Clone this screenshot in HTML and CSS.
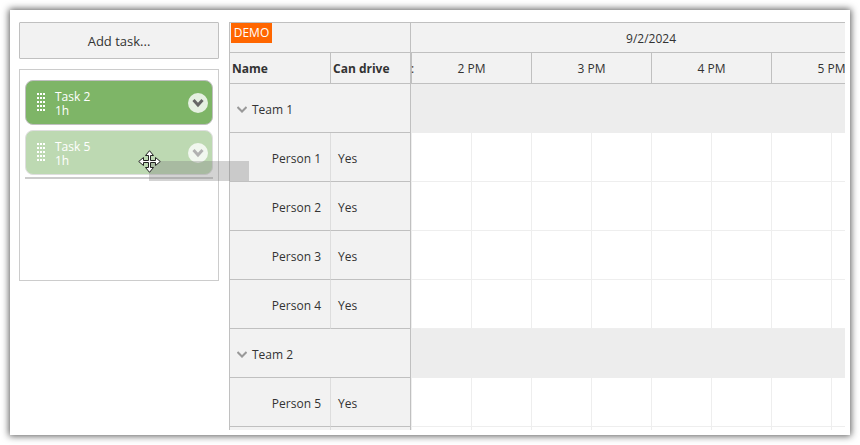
FILE: index.html
```html
<!DOCTYPE html>
<html lang="en">
<head>
<meta charset="utf-8">
<title>Scheduler</title>
<link rel="stylesheet" href="styles.css">
</head>
<body>
<main class="frame">
  <div class="content">
    <aside class="sidebar">
      <button type="button" class="add">Add task...</button>
      <div class="queue">
        <article class="task">
          <svg class="handle" viewBox="0 0 8 19" aria-hidden="true"><path d="M0 1h8M0 5h8M0 9h8M0 13h8M0 17h8"/></svg>
          <div class="task-text">Task 2<br>1h</div>
          <button type="button" class="more" aria-label="Task 2 menu"><svg viewBox="0 0 20 20"><path d="M5.500 7l4.500 5l4.500-5"/></svg></button>
        </article>
        <article class="task dragged">
          <svg class="handle" viewBox="0 0 8 19" aria-hidden="true"><path d="M0 1h8M0 5h8M0 9h8M0 13h8M0 17h8"/></svg>
          <div class="task-text">Task 5<br>1h</div>
          <button type="button" class="more" aria-label="Task 5 menu"><svg viewBox="0 0 20 20"><path d="M5.500 7l4.500 5l4.500-5"/></svg></button>
        </article>
        <div class="drop-line"></div>
      </div>
    </aside>
    <div class="scheduler">
      <table>
        <colgroup><col class="c-name"><col class="c-drive"><col class="c-edge"><col class="c-hour"><col class="c-hour"><col class="c-hour"><col class="c-hour"></colgroup>
        <thead>
          <tr class="days"><td class="corner" colspan="2"><span class="demo">DEMO</span></td><th class="day" colspan="5">9/2/2024</th></tr>
          <tr class="hours"><th class="label">Name</th><th class="label">Can drive</th><th class="edge">:</th><th>2 PM</th><th>3 PM</th><th>4 PM</th><th>5 PM</th></tr>
        </thead>
        <tbody>
          <tr class="team"><th colspan="2"><svg class="chevron" viewBox="0 0 10 7" aria-hidden="true"><path d="M.5 1L5 5.500L9.500 1"/></svg>Team 1</th><td class="slots" colspan="5"></td></tr>
          <tr><th class="person">Person 1</th><td class="drive">Yes</td><td class="slots" colspan="5"></td></tr>
          <tr><th class="person">Person 2</th><td class="drive">Yes</td><td class="slots" colspan="5"></td></tr>
          <tr><th class="person">Person 3</th><td class="drive">Yes</td><td class="slots" colspan="5"></td></tr>
          <tr><th class="person">Person 4</th><td class="drive">Yes</td><td class="slots" colspan="5"></td></tr>
          <tr class="team"><th colspan="2"><svg class="chevron" viewBox="0 0 10 7" aria-hidden="true"><path d="M.5 1L5 5.500L9.500 1"/></svg>Team 2</th><td class="slots" colspan="5"></td></tr>
          <tr><th class="person">Person 5</th><td class="drive">Yes</td><td class="slots" colspan="5"></td></tr>
          <tr><th class="person"></th><td class="drive"></td><td class="slots" colspan="5"></td></tr>
        </tbody>
      </table>
    </div>
  </div>
  <div class="ghost"></div>
  <svg class="cursor" viewBox="0 0 23 23" aria-hidden="true"><path d="M11.500 .7L15.500 5.500H12.500V10.500H17.500V7.500L22.300 11.500L17.500 15.500V12.500H12.500V17.500H15.500L11.500 22.300L7.500 17.500H10.500V12.500H5.500V15.500L.7 11.500L5.500 7.500V10.500H10.500V5.500H7.500Z"/></svg>
</main>
</body>
</html>
```
FILE: styles.css
```css
* { box-sizing: border-box; }

body {
  margin: 0;
  padding: 10px;
  height: 100vh;
  background: #fff;
  color: #333;
  font: 12px/16px "Open Sans", "Noto Sans", sans-serif;
}

.frame {
  position: relative;
  height: 100%;
  padding: 12px 5px 5px 9px;
  background: #fff;
  box-shadow: 0 0 7px 1px rgba(0, 0, 0, .65);
}

.content {
  display: flex;
  gap: 10px;
  height: 100%;
  overflow: hidden;
}

.sidebar {
  flex: 0 0 200px;
  display: flex;
  flex-direction: column;
  gap: 10px;
}

button { font: inherit; color: inherit; }

.add {
  height: 37px;
  border: 1px solid #c0c0c0;
  border-radius: 1px;
  background: #f2f2f2;
  font-size: 13px;
}

.queue {
  display: flex;
  flex-direction: column;
  gap: 5px;
  height: 212px;
  padding: 10px 5px;
  border: 1px solid #ccc;
}

.task {
  display: flex;
  align-items: center;
  height: 45px;
  padding: 0 4px 0 11px;
  border: 1px solid #c0c0c0;
  border-radius: 8px;
  background: #7eb567;
  color: #fff;
}

.dragged { opacity: .5; }

.handle {
  width: 8px;
  height: 19px;
  margin-right: 10px;
  stroke: #fff;
  stroke-width: 2;
  stroke-dasharray: 2 1;
}

.task-text { flex: 1; padding-top: 2px; line-height: 14px; }

.more {
  width: 20px;
  height: 20px;
  padding: 0;
  border: 0;
  border-radius: 50%;
  background: #e5f0e1;
}

.more svg { display: block; fill: none; stroke: #666; stroke-width: 3; }

.drop-line { height: 2px; margin-top: -3px; background: #ccc; }

.scheduler {
  flex: 1;
  min-width: 0;
  overflow: hidden;
  border: 1px solid #c0c0c0;
  border-width: 1px 0 0 1px;
}

table {
  width: 662px;
  table-layout: fixed;
  border-collapse: separate;
  border-spacing: 0;
}

.c-name { width: 101px; }
.c-drive { width: 80px; }
.c-edge { width: 1px; }
.c-hour { width: 120px; }

th, td {
  height: 49px;
  padding: 4px 0 0;
  border: 1px solid #c0c0c0;
  border-width: 0 1px 1px 0;
  background: #f2f2f2;
  font-weight: 400;
  text-align: center;
}

.days > * { height: 30px; padding-top: 2px; }
.hours > * { height: 31px; padding-top: 2px; }
.days .corner { padding-top: 0; text-align: left; vertical-align: top; }

.demo {
  display: block;
  width: 41px;
  margin-left: 1px;
  background: #f60;
  color: #fff;
  line-height: 20px;
  text-align: center;
}

.hours .label { padding-left: 2px; font-weight: 700; text-align: left; }

.team th { padding-left: 7px; text-align: left; }

.chevron {
  width: 10px;
  height: 7px;
  margin-right: 5px;
  fill: none;
  stroke: #999;
  stroke-width: 2;
  vertical-align: 1px;
}

.person { padding-right: 9px; border-right-color: #ddd; text-align: right; }
.drive { padding-left: 7px; text-align: left; }

.slots {
  border-right: 0;
  border-bottom-color: #eee;
  background: repeating-linear-gradient(90deg, #eee 0 1px, #fff 1px 60px);
}

.team .slots { background: #ededed; border-bottom-color: #ededed; }

.ghost {
  position: absolute;
  left: 139px;
  top: 151px;
  width: 100px;
  height: 20px;
  background: rgba(128, 128, 128, .35);
}

.cursor {
  position: absolute;
  left: 128px;
  top: 140px;
  width: 23px;
  height: 23px;
  fill: #fff;
  stroke: #222;
}
```
